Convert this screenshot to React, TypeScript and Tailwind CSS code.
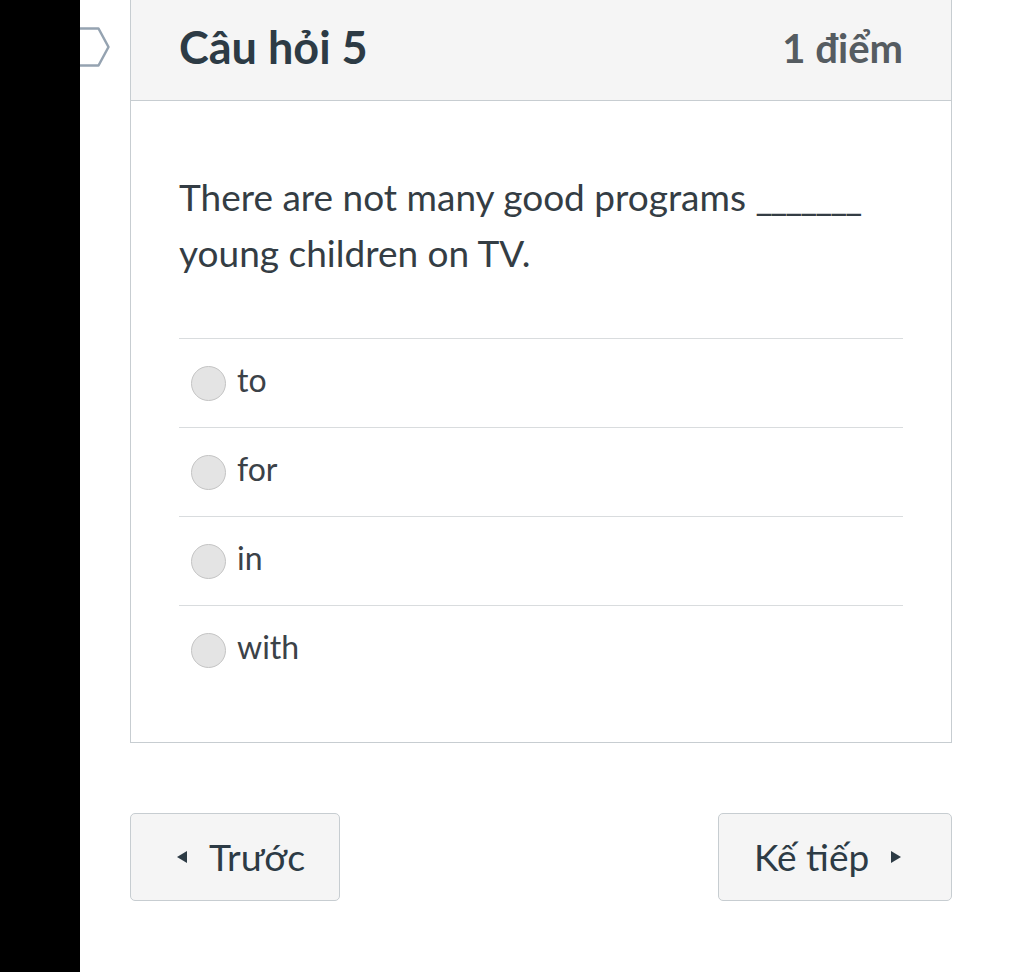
import React from 'react';

const answers = ['to', 'for', 'in', 'with'];

const Radio = () => (
  <span className="block w-[35px] h-[35px] rounded-full bg-[#e4e4e4] border border-[#c4c4c4] shrink-0" />
);

export default function App() {
  return (
    <div className="min-h-[972px] bg-white flex font-['Lato',sans-serif] text-[#2d3b45]">
      <div className="w-[80px] bg-black shrink-0" />

      {/* flag marker, partly hidden by the dark strip */}
      <div className="w-[50px] shrink-0 pt-[27px]">
        <svg width="32" height="40" viewBox="0 0 32 40" fill="none">
          <path d="M0 1.5 H18.5 L28.5 20 L18.5 38.5 H0" stroke="#95a3b1" strokeWidth="2.5" strokeLinejoin="round" />
        </svg>
      </div>

      <div className="w-[822px] shrink-0">
        <div className="border border-t-0 border-[#c7cdd1]">
          <div className="h-[101px] bg-[#f5f5f5] border-b border-[#c7cdd1] px-[48px] flex items-center justify-between">
            <h2 className="text-[45px] font-bold -mt-[4px]">Câu hỏi 5</h2>
            <span className="text-[40px] font-bold text-[#555c61] -mt-[4px]">1 điểm</span>
          </div>

          <div className="px-[48px] pt-[68px] pb-[48px]">
            <p className="text-[37px] leading-[56px] text-[#343d44] pr-[38px]">
              There are not many good programs <span className="tracking-[-2px]">_______</span> young children on TV.
            </p>

            <div className="mt-[57px]">
              {answers.map((a) => (
                <div
                  key={a}
                  className="h-[89px] flex items-center gap-[11px] pl-[12px] border-t border-[#d9dcde]"
                >
                  <Radio />
                  <span className="text-[32px] leading-none text-[#3b4248] -mt-[6px]">{a}</span>
                </div>
              ))}
            </div>
          </div>
        </div>

        <div className="mt-[70px] flex justify-between">
          <button className="h-[88px] w-[210px] bg-[#f5f5f5] border border-[#c7cdd1] rounded-[5px] flex items-center pl-[46px] gap-[22px]">
            <span className="w-0 h-0 border-y-[6px] border-y-transparent border-r-[10px] border-r-[#2d3b45]" />
            <span className="text-[37.5px]">Trước</span>
          </button>
          <button className="h-[88px] w-[234px] bg-[#f5f5f5] border border-[#c7cdd1] rounded-[5px] flex items-center pl-[35px] gap-[22px]">
            <span className="text-[37px]">Kế tiếp</span>
            <span className="w-0 h-0 border-y-[6px] border-y-transparent border-l-[10px] border-l-[#2d3b45]" />
          </button>
        </div>
      </div>
    </div>
  );
}
